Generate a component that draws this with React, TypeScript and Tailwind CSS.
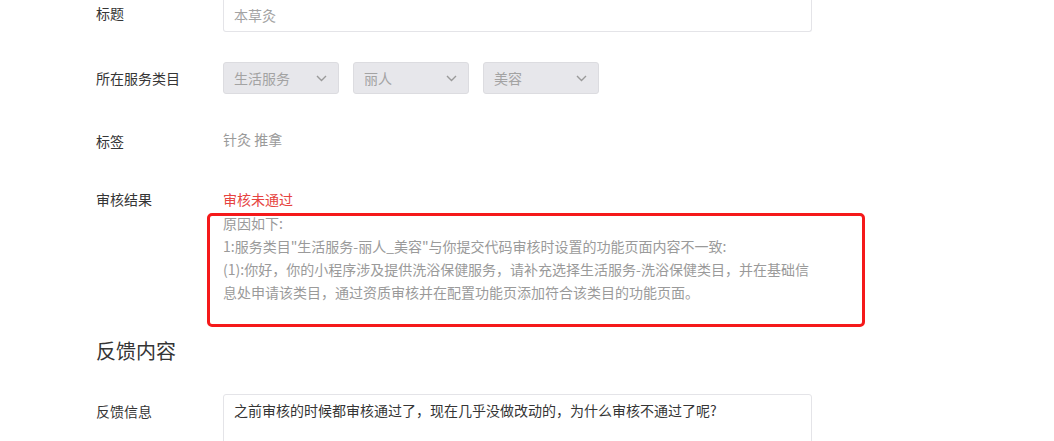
import React from "react";

const Chevron = () => (
  <svg width="11" height="7" viewBox="0 0 11 7" className="shrink-0">
    <polyline points="1,1 5.5,5.5 10,1" fill="none" stroke="#9a9a9a" strokeWidth="1.4" />
  </svg>
);

const Select = ({ text }: { text: string }) => (
  <div className="flex h-[32px] w-[116px] items-center justify-between rounded-[3px] border border-[#dcdce0] bg-[#e7e7eb] pl-[10px] pr-[11px] text-[14px] text-[#a3a3a3]">
    <span>{text}</span>
    <Chevron />
  </div>
);

export default function App() {
  return (
    <div
      className="h-[441px] w-[1054px] overflow-hidden bg-white pl-[96px] text-[14px] text-[#353535]"
      style={{ fontFamily: '"Noto Sans CJK SC", "Microsoft YaHei", sans-serif' }}
    >
      {/* 标题 */}
      <div className="flex items-start">
        <div className="w-[127px] leading-[26px]">标题</div>
        <div className="h-[32px] w-[589px] rounded-b-[3px] border border-t-0 border-[#e4e4e8] pl-[10px] leading-[30px] text-[#a3a3a3]">
          本草灸
        </div>
      </div>

      {/* 所在服务类目 */}
      <div className="mt-[30px] flex h-[32px] items-center">
        <div className="w-[127px]">所在服务类目</div>
        <div className="flex gap-[14px]">
          <Select text="生活服务" />
          <Select text="丽人" />
          <Select text="美容" />
        </div>
      </div>

      {/* 标签 */}
      <div className="mt-[35px] flex items-start">
        <div className="w-[127px] leading-[24px]">标签</div>
        <div className="leading-[20px] text-[#9a9a9a]">针灸 推拿</div>
      </div>

      {/* 审核结果 */}
      <div className="mt-[34px] flex items-start">
        <div className="w-[127px] leading-[24px]">审核结果</div>
        <div className="relative w-[589px]">
          <div className="leading-[24px] text-[#e64340]">审核未通过</div>
          <div className="pt-[1px] leading-[23px] text-[#9a9a9a]">
            <div>原因如下:</div>
            <div>1:服务类目"生活服务-丽人_美容"与你提交代码审核时设置的功能页面内容不一致:</div>
            <div>
              (1):你好，你的小程序涉及提供洗浴保健服务，请补充选择生活服务-洗浴保健类目，并在基础信息处申请该类目，通过资质审核并在配置功能页添加符合该类目的功能页面。
            </div>
          </div>
          <div className="pointer-events-none absolute left-[-16px] top-[26px] h-[114px] w-[658px] rounded-[5px] border-[3px] border-[#f5191a]" />
        </div>
      </div>

      {/* 反馈内容 */}
      <div className="mt-[33px] text-[20px] leading-[28px] text-[#353535]">反馈内容</div>

      {/* 反馈信息 */}
      <div className="mt-[29px] flex items-start">
        <div className="w-[127px] pt-[7px] leading-[20px]">反馈信息</div>
        <div className="h-[80px] w-[589px] rounded-[3px] border border-[#e4e4e8] pl-[10px] pt-[5px] leading-[20px] text-[#353535]">
          之前审核的时候都审核通过了，现在几乎没做改动的，为什么审核不通过了呢?
        </div>
      </div>
    </div>
  );
}
